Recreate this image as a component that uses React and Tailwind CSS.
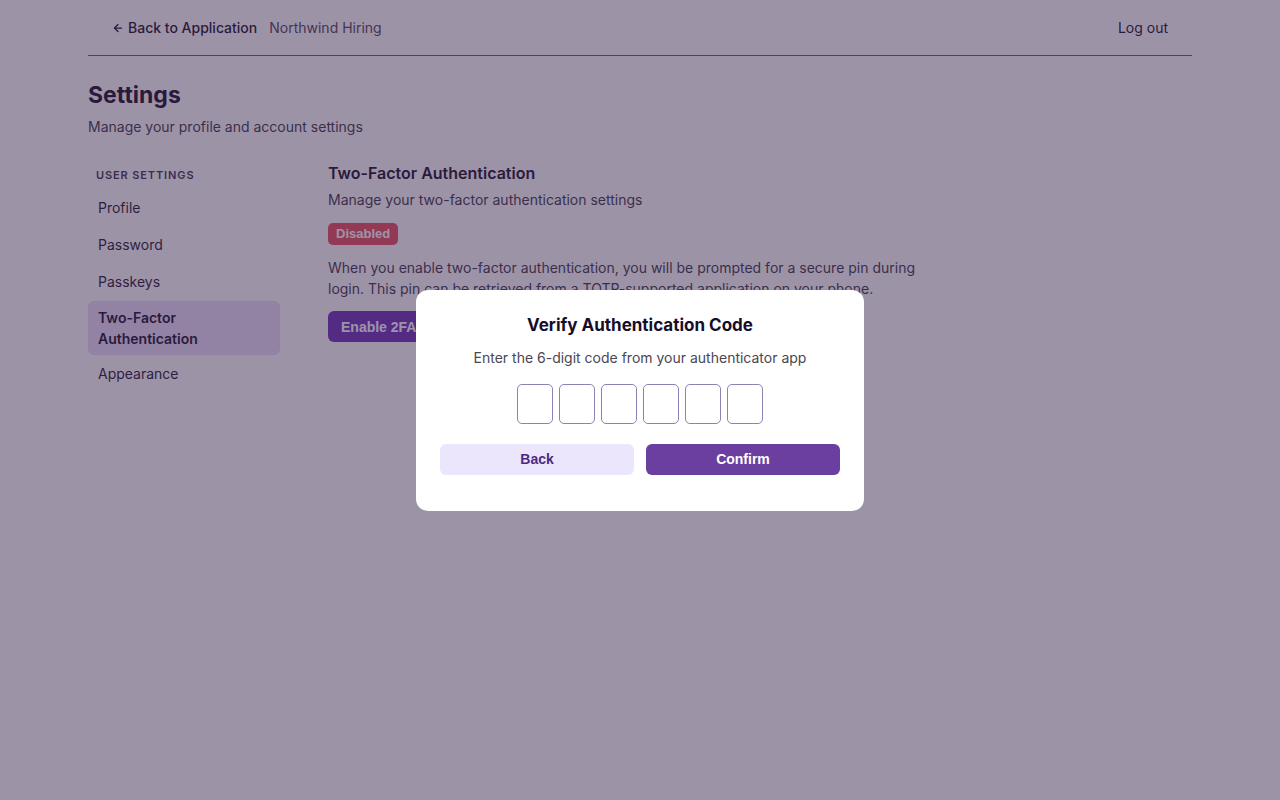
import { ArrowLeft } from 'lucide-react'

const navItems = ['Profile', 'Password', 'Passkeys', 'Two-Factor Authentication', 'Appearance']

function CodeInputs() {
  return (
    <div className="flex justify-center gap-[6px]">
      {[0, 1, 2, 3, 4, 5].map((i) => (
        <input
          key={i}
          maxLength={1}
          className="w-[36px] h-[40px] rounded-[5px] border border-[#8a82b4] bg-white text-center text-lg outline-none"
        />
      ))}
    </div>
  )
}

export default function App() {
  return (
    <div className="relative min-h-screen bg-white text-[#160d2a]" style={{ fontFamily: 'Inter, "Noto Sans", sans-serif' }}>
      <div className="max-w-[1104px] mx-auto">
        {/* Top bar */}
        <header className="h-[56px] pt-[1px] flex items-center justify-between px-6 border-b border-[#5a4fd6]">
          <div className="flex items-center gap-3 text-sm">
            <a className="flex items-center gap-1 font-medium text-[#160d2a]">
              <ArrowLeft className="w-3 h-3" strokeWidth={2.5} />
              Back to Application
            </a>
            <span className="text-[#4a4458]">Northwind Hiring</span>
          </div>
          <button className="text-sm text-[#160d2a]">Log out</button>
        </header>

        <main className="pt-[23px]">
          <h1 className="text-[23px] font-bold leading-8">Settings</h1>
          <p className="mt-[6px] text-sm leading-5 text-[#3b3548]">Manage your profile and account settings</p>

          <div className="mt-[22px] flex gap-12">
            {/* Sidebar */}
            <aside className="w-[192px] shrink-0">
              <div className="px-2 pt-2 text-[11px] font-semibold tracking-[0.08em] text-[#3b3548] leading-4">USER SETTINGS</div>
              <nav className="mt-[7px] flex flex-col gap-px">
                {navItems.map((item) =>
                  item === 'Two-Factor Authentication' ? (
                    <a key={item} className="rounded-md bg-[#e8dcf8] px-2.5 py-[6px] text-sm font-semibold leading-[21px]">
                      Two-Factor
                      <br />
                      Authentication
                    </a>
                  ) : (
                    <a key={item} className="px-2.5 py-2 text-sm leading-5 text-[#1d1530]">
                      {item}
                    </a>
                  )
                )}
              </nav>
            </aside>

            {/* 2FA panel */}
            <section className="flex-1">
              <h2 className="text-base font-semibold leading-7">Two-Factor Authentication</h2>
              <p className="mt-[2px] text-sm leading-[22px] text-[#3b3548]">Manage your two-factor authentication settings</p>
              <span
                className="mt-3 inline-block rounded-[5px] bg-[#e84b5a] px-2 text-[13px] font-bold leading-[22px] text-white"
                style={{ fontFamily: '"Liberation Sans", Arial, sans-serif' }}
              >
                Disabled
              </span>
              <p className="mt-3 max-w-[590px] text-sm leading-[21px] text-[#3b3548]">
                When you enable two-factor authentication, you will be prompted for a secure pin during login. This pin can be retrieved from a TOTP-supported application on your phone.
              </p>
              <button
                className="mt-3 h-[31px] rounded-md bg-[#6b2fb8] px-[13px] text-sm font-bold text-white"
                style={{ fontFamily: '"Liberation Sans", Arial, sans-serif' }}
              >
                Enable 2FA
              </button>
            </section>
          </div>
        </main>
      </div>

      {/* Verify dialog */}
      <div className="fixed inset-0 bg-[#3c2850]/50 flex items-center justify-center">
        <div className="w-[448px] rounded-xl bg-white px-6 pt-6 pb-9 text-center">
          <h3 className="text-[17px] font-bold leading-[22px] text-[#160d2a]">Verify Authentication Code</h3>
          <p className="mt-3 text-sm leading-5 text-[#4a4752]">Enter the 6-digit code from your authenticator app</p>
          <div className="mt-4">
            <CodeInputs />
          </div>
          <div className="mt-5 grid grid-cols-2 gap-3" style={{ fontFamily: '"Liberation Sans", Arial, sans-serif' }}>
            <button className="h-[31px] rounded-md bg-[#ece6fc] text-sm font-bold text-[#4b2a84]">Back</button>
            <button className="h-[31px] rounded-md bg-[#6b3fa0] text-sm font-bold text-white">Confirm</button>
          </div>
        </div>
      </div>
    </div>
  )
}
